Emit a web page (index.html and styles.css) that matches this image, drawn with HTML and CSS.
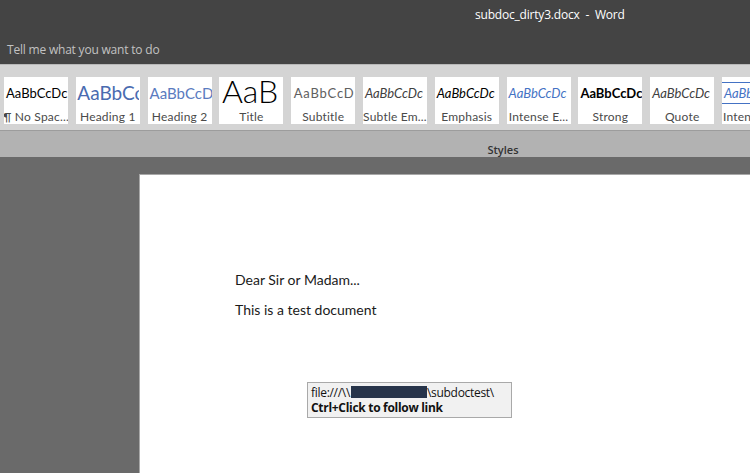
FILE: index.html
```html
<!DOCTYPE html>
<html lang="en">
<head>
	<meta charset="utf-8">
	<title>subdoc_dirty3.docx - Word</title>
	<link rel="stylesheet" href="styles.css">
</head>
<body>
	<div class="titlebar">
		<div class="doc-title">subdoc_dirty3.docx&nbsp; - &nbsp;Word</div>
		<div class="tellme">Tell me what you want to do</div>
	</div>

	<div class="ribbon">
		<div class="gallery">
			<div class="style-item"><span class="sample s-nospace">AaBbCcDc</span><span class="name">&para; No Spac...</span></div>
			<div class="style-item"><span class="sample s-h1">AaBbCc</span><span class="name">Heading 1</span></div>
			<div class="style-item"><span class="sample s-h2">AaBbCcD</span><span class="name">Heading 2</span></div>
			<div class="style-item"><span class="sample s-title">AaB</span><span class="name">Title</span></div>
			<div class="style-item"><span class="sample s-subtitle">AaBbCcD</span><span class="name">Subtitle</span></div>
			<div class="style-item"><span class="sample s-subtle">AaBbCcDc</span><span class="name">Subtle Em...</span></div>
			<div class="style-item"><span class="sample s-emph">AaBbCcDc</span><span class="name">Emphasis</span></div>
			<div class="style-item"><span class="sample s-intense">AaBbCcDc</span><span class="name">Intense E...</span></div>
			<div class="style-item"><span class="sample s-strong">AaBbCcDc</span><span class="name">Strong</span></div>
			<div class="style-item"><span class="sample s-quote">AaBbCcDc</span><span class="name">Quote</span></div>
			<div class="style-item cut"><span class="sample s-iquote">AaBbCcDc</span><span class="name">Intense Quote</span></div>
		</div>
	</div>
	<div class="group-label">Styles</div>

	<div class="canvas">
		<div class="page">
			<p>Dear Sir or Madam...</p>
			<p>This is a test document</p>

			<div class="tooltip">
				<div class="tip-line">file:///\\<span class="redact"></span>\subdoctest\</div>
				<div class="tip-line tip-bold">Ctrl+Click to follow link</div>
			</div>
		</div>
	</div>
</body>
</html>
```

FILE: styles.css
```css
body {
	margin: 0;
	width: 750px;
	height: 473px;
	overflow: hidden;
	display: flex;
	flex-direction: column;
	font-family: "Open Sans", "Liberation Sans", sans-serif;
	background-color: #6a6a6a;
}

.titlebar {
	height: 64px;
	background-color: #444444;
	color: #ffffff;
	font-size: 12px;
}
.doc-title {
	padding: 7px 0 0 475px;
	height: 20px;
	line-height: 16px;
	letter-spacing: -0.2px;
}
.tellme {
	padding: 15px 0 0 7px;
	color: #c2c2c2;
	font-size: 12px;
	line-height: 16px;
	letter-spacing: -0.2px;
}

.ribbon {
	height: 65px;
	background-color: #d4d4d4;
	border-top: 1px solid #b8b8b8;
	border-bottom: 1px solid #9c9c9c;
	overflow: hidden;
}
.gallery {
	display: flex;
	gap: 7.8px;
	padding: 12px 0 0 4px;
	white-space: nowrap;
}
.style-item {
	flex: 0 0 64px;
	height: 47px;
	background-color: #ffffff;
	display: flex;
	flex-direction: column;
	align-items: center;
	overflow: hidden;
}
.style-item.cut {
	align-items: flex-start;
}
.sample {
	height: 32px;
	line-height: 32px;
	width: 62px;
	overflow: hidden;
	text-align: left;
	padding-left: 2px;
	font-family: "Lato", "Open Sans", sans-serif;
	font-size: 13px;
	color: #000000;
}
.name {
	margin-top: 1px;
	font-size: 12px;
	line-height: 14px;
	color: #4a4a4a;
	font-family: "Lato", "Open Sans", sans-serif;
	letter-spacing: 0.2px;
}
.cut .name {
	padding-left: 1px;
}

.s-nospace { font-size: 13px; }
.s-h1 { font-size: 19px; color: #4a6bb0; padding-left: 1px; }
.s-h2 { font-size: 15px; color: #5a7bc0; }
.s-title { font-size: 32px; font-weight: 300; line-height: 28px; padding-left: 3px; }
.s-subtitle { font-size: 13px; color: #606060; letter-spacing: 0.8px; padding-left: 3px; }
.s-subtle { font-style: italic; color: #404040; }
.s-emph { font-style: italic; }
.s-intense { font-style: italic; color: #4472c4; }
.s-strong { font-weight: bold; }
.s-quote { font-style: italic; color: #404040; }
.s-iquote {
	font-style: italic;
	color: #4472c4;
	height: 22px;
	line-height: 20px;
	margin-top: 5px;
	margin-bottom: 5px;
	border-top: 1px solid #4472c4;
	border-bottom: 1px solid #4472c4;
	box-sizing: border-box;
}

.group-label {
	height: 26px;
	background-color: #b2b2b2;
	font-size: 11px;
	font-weight: 600;
	color: #333333;
	text-align: center;
	padding-left: 256px;
	line-height: 14px;
	padding-top: 12px;
	box-sizing: border-box;
}

.canvas {
	flex: 1;
	padding: 17px 0 0 139px;
	overflow: hidden;
}
.page {
	position: relative;
	height: 320px;
	background-color: #ffffff;
	border-top: 1px solid #a8a8a8;
	border-left: 1px solid #a8a8a8;
	padding: 95px 0 0 95px;
	font-family: "Lato", "Open Sans", sans-serif;
	font-size: 14px;
	color: #1a1a1a;
}
.page p {
	margin: 0 0 11px;
	line-height: 19px;
}

.tooltip {
	position: absolute;
	left: 167px;
	top: 207px;
	width: 200px;
	padding: 2px 0 2px 3px;
	background-color: #f1f1f1;
	border: 1px solid #a9a9a9;
	font-family: "Open Sans", "Liberation Sans", sans-serif;
	font-size: 12px;
	color: #111111;
	letter-spacing: -0.3px;
}
.tip-line {
	height: 15px;
	line-height: 15px;
}
.redact {
	display: inline-block;
	width: 76px;
	height: 12px;
	margin-left: 1px;
	background-color: #27344a;
	vertical-align: -1px;
}
.tip-bold {
	font-weight: bold;
}
```
